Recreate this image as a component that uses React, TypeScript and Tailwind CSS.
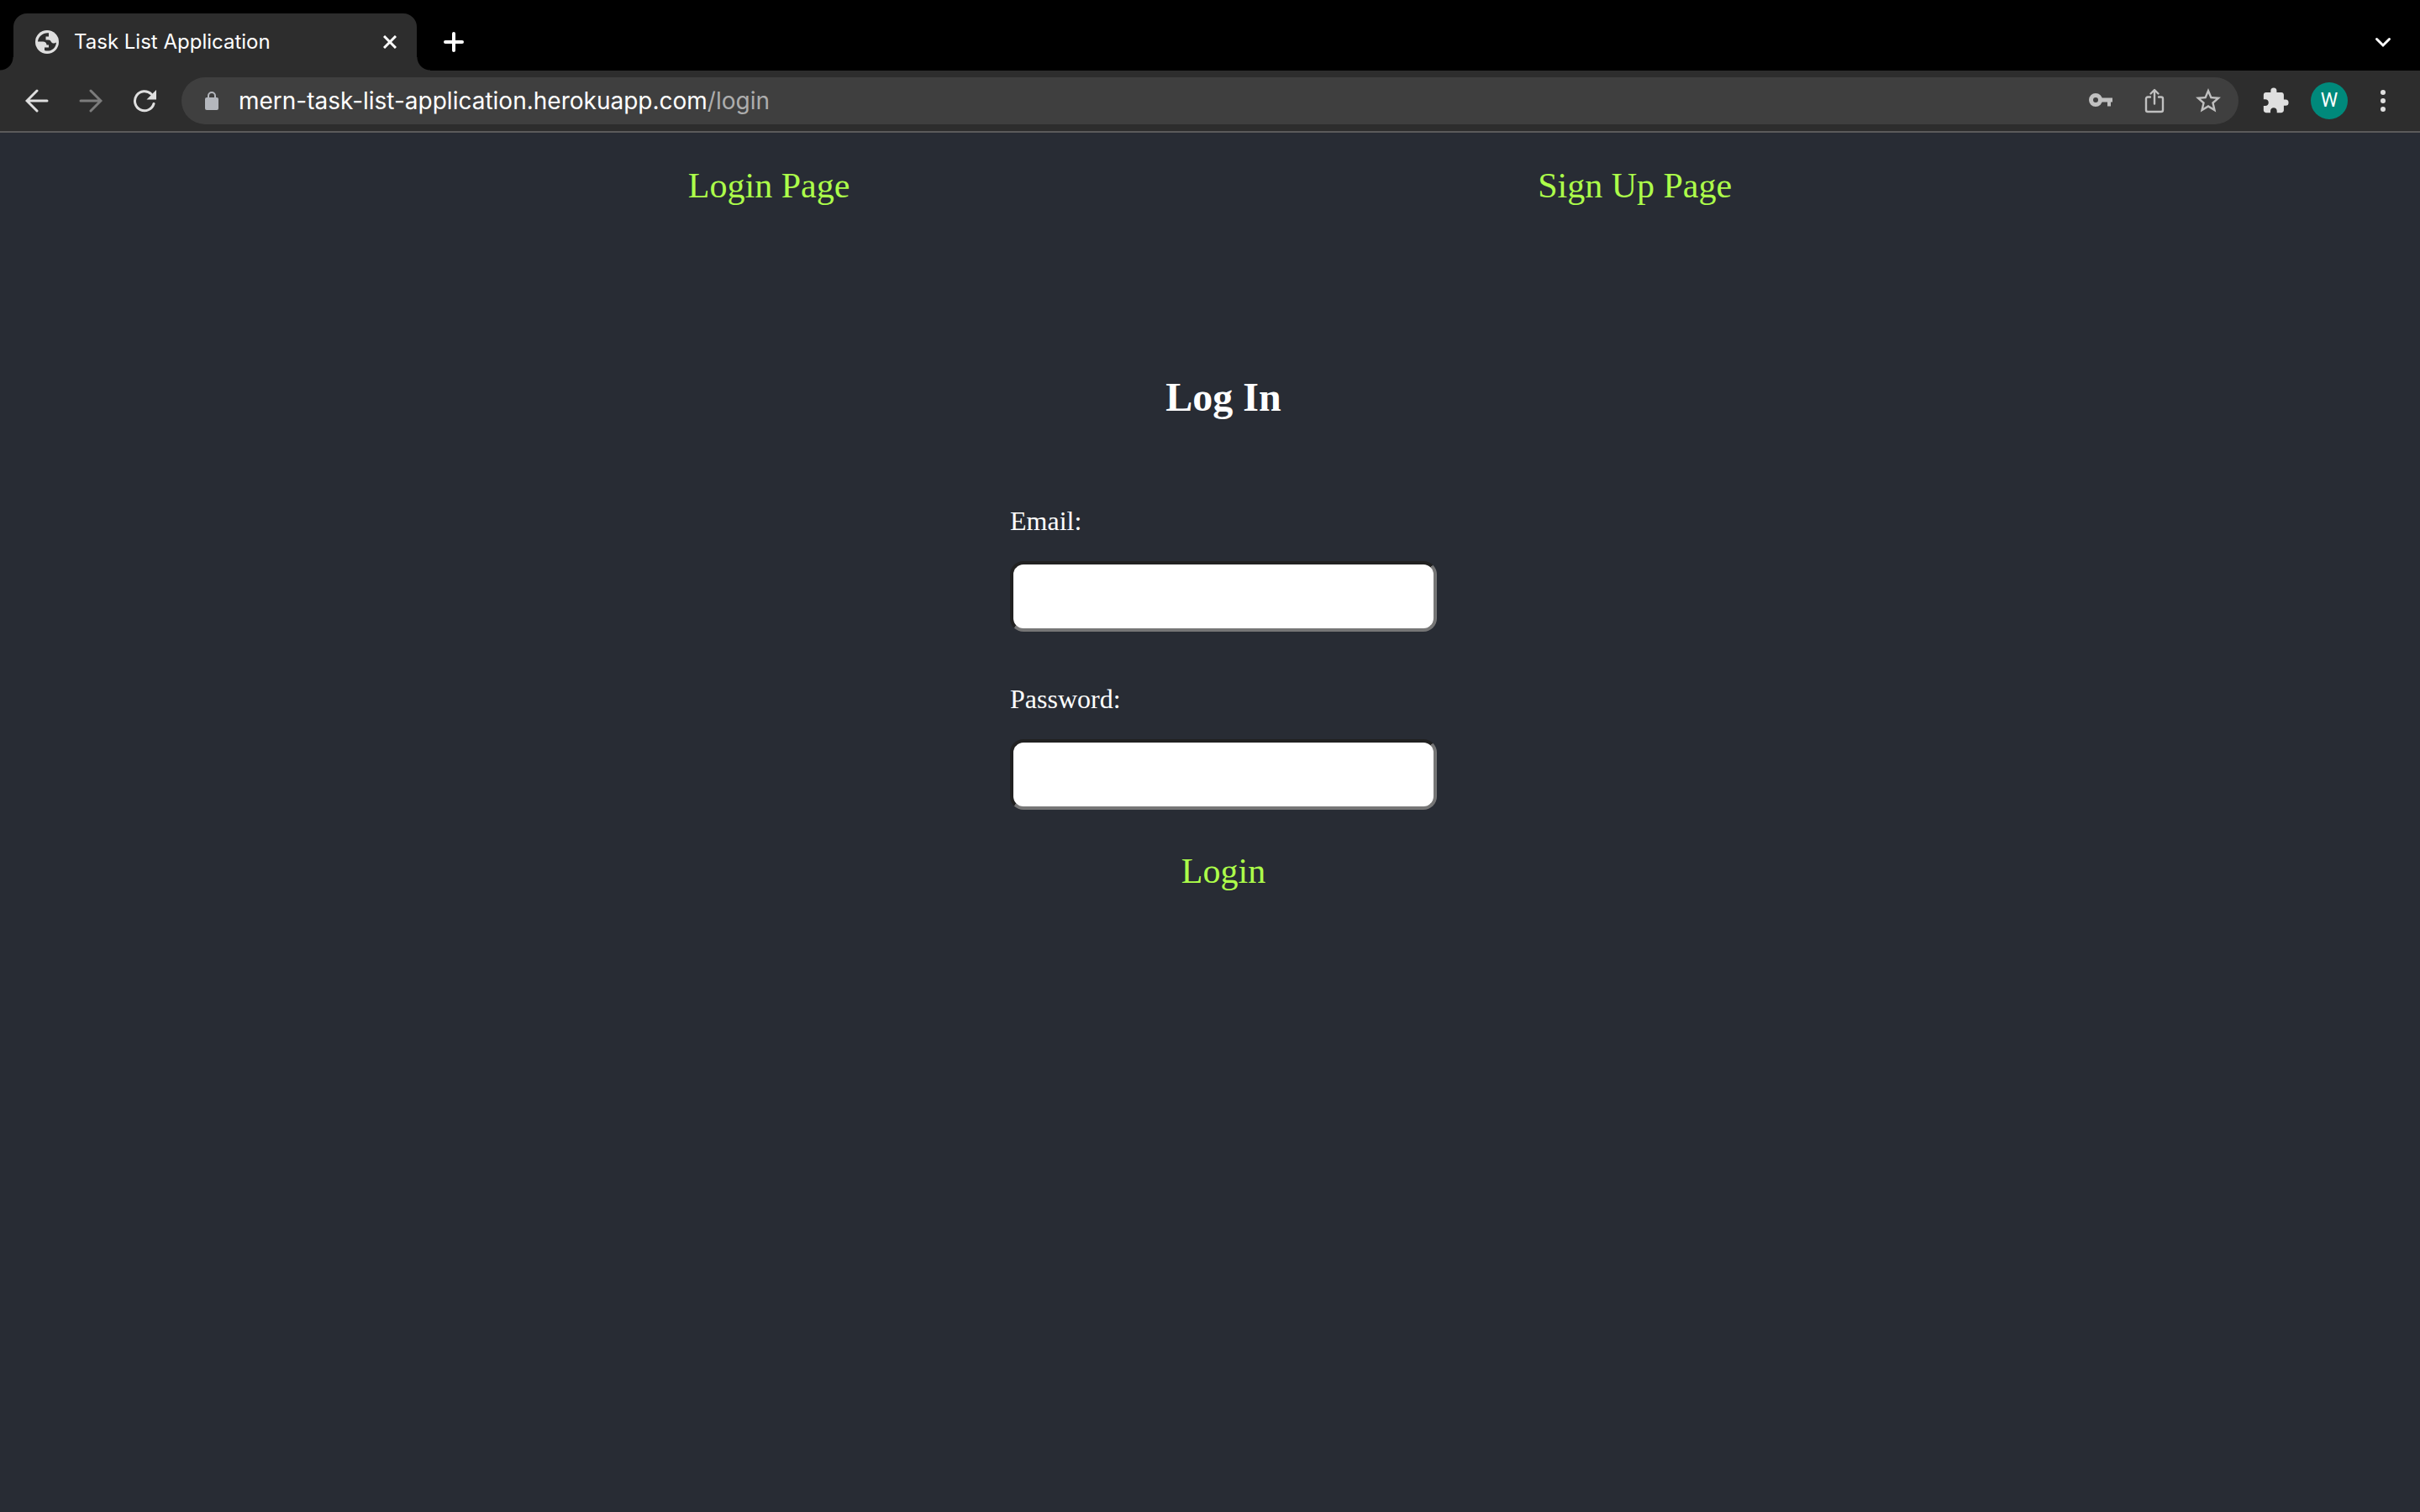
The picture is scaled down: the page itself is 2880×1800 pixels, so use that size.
import React from "react";
import { MdStarBorder, MdExtension } from "react-icons/md";

const iconButton = "flex shrink-0 items-center justify-center";

function GlobeIcon() {
  return (
    <svg className="size-7 shrink-0" viewBox="0 0 28 28" fill="none" aria-hidden="true">
      <circle cx="14" cy="14" r="14" fill="#dfdfdf" />
      <path
        d="M16 3.200C9.500 2.500 3.500 7 3 13.500h6c2.500 0 4.500 1.500 4.500 4h2.500v3h-5v3.500c6.500 2 13.500-1.500 14-9.500-2 1.500-4.500 1.500-6 -.5-1-1.500-1-2.500-3.500-2.500h-3V7.500h3.500z"
        fill="#2d2d2d"
      />
    </svg>
  );
}

function TabStrip() {
  return (
    <div className="flex h-[84px] items-end bg-black pl-4">
      <div className="relative flex h-[68px] w-[480px] items-center rounded-t-2xl bg-[#2d2d2d] pr-4 pl-[26px]">
        <span className="absolute bottom-0 -left-4 size-4 bg-[radial-gradient(circle_at_0_0,#000_15px,#2d2d2d_16px)]" />
        <span className="absolute -right-4 bottom-0 size-4 bg-[radial-gradient(circle_at_100%_0,#000_15px,#2d2d2d_16px)]" />
        <GlobeIcon />
        <span className="ml-[18px] flex-1 text-2xl leading-8 whitespace-nowrap text-white">Task List Application</span>
        <button type="button" aria-label="Close tab" className={`${iconButton} size-8`}>
          <svg className="size-4" viewBox="0 0 16 16" stroke="#fff" strokeWidth="3" aria-hidden="true">
            <path d="M1 1l14 14M15 1L1 15" />
          </svg>
        </button>
      </div>
      <button type="button" aria-label="New tab" className={`${iconButton} ml-5 h-[68px] w-12`}>
        <svg className="size-6" viewBox="0 0 24 24" stroke="#fff" strokeWidth="4" strokeLinecap="round" aria-hidden="true">
          <path d="M2 12h20M12 2v20" />
        </svg>
      </button>
      <button type="button" aria-label="Search tabs" className={`${iconButton} mr-5 ml-auto h-[68px] w-12`}>
        <svg className="size-6" viewBox="0 0 24 24" fill="none" stroke="#fff" strokeWidth="3" strokeLinecap="round" aria-hidden="true">
          <path d="M4.500 8.500l7.500 7.500 7.500-7.500" />
        </svg>
      </button>
    </div>
  );
}

function Toolbar() {
  return (
    <div className="flex h-[74px] items-center border-b-2 border-[#5b5b5b] bg-[#2d2d2d] pr-5 pl-5">
      <button type="button" aria-label="Back" className={`${iconButton} size-12`}>
        <svg className="size-7" viewBox="0 0 28 28" fill="none" stroke="#dfdfdf" strokeWidth="3" strokeLinecap="round" aria-hidden="true">
          <path d="M26 14H3M14 2L2 14l12 12" />
        </svg>
      </button>
      <button type="button" aria-label="Forward" disabled className={`${iconButton} ml-4 size-12`}>
        <svg className="size-7" viewBox="0 0 28 28" fill="none" stroke="#7c7c7c" strokeWidth="3" strokeLinecap="round" aria-hidden="true">
          <path d="M2 14h23M14 2l12 12-12 12" />
        </svg>
      </button>
      <button type="button" aria-label="Reload" className={`${iconButton} ml-4 size-12`}>
        <svg className="size-7" viewBox="0 0 28 28" fill="none" aria-hidden="true">
          <path d="M22 6A11.500 11.500 0 1 0 25 17.500" stroke="#dfdfdf" strokeWidth="3" strokeLinecap="round" />
          <path d="M28 1v11.500H16.500z" fill="#dfdfdf" />
        </svg>
      </button>
      <div className="ml-5 flex h-14 flex-1 items-center rounded-full bg-[#3f3f3f] pr-3 pl-7">
        <svg className="h-[22px] w-4 shrink-0" viewBox="0 0 16 22" fill="none" aria-hidden="true">
          <path d="M4 8V5a4 4 0 0 1 8 0v3" stroke="#b4b7bd" strokeWidth="2" />
          <rect y="7" width="16" height="15" rx="2" fill="#b4b7bd" />
        </svg>
        <span className="ml-6 flex-1 text-[28px] leading-9 whitespace-nowrap text-[#adadad]">
          <span className="text-white">mern-task-list-application.herokuapp.com</span>/login
        </span>
        <button type="button" aria-label="Saved passwords" className={`${iconButton} size-12`}>
          <svg className="h-5 w-7" viewBox="0 0 28 20" fill="none" aria-hidden="true">
            <circle cx="8" cy="9" r="5.500" stroke="#c0c0c0" strokeWidth="5" />
            <path d="M14 6.500h14v5h-2v5h-4v-5h-8z" fill="#c0c0c0" />
          </svg>
        </button>
        <button type="button" aria-label="Share" className={`${iconButton} ml-4 size-12`}>
          <svg className="h-[30px] w-6" viewBox="0 0 24 30" fill="none" stroke="#c0c0c0" strokeWidth="2.400" strokeLinecap="round" strokeLinejoin="round" aria-hidden="true">
            <path d="M7 10.500H4a2 2 0 0 0-2 2V26a2 2 0 0 0 2 2h16a2 2 0 0 0 2-2V12.500a2 2 0 0 0-2-2h-3M12 18.500V3M7.500 6.500L12 2l4.500 4.500" />
          </svg>
        </button>
        <button type="button" aria-label="Bookmark" className={`${iconButton} ml-4 size-12`}>
          <MdStarBorder className="size-9 text-[#c0c0c0]" />
        </button>
      </div>
      <button type="button" aria-label="Extensions" className={`${iconButton} ml-5 size-12`}>
        <MdExtension className="size-[34px] text-[#dfdfdf]" />
      </button>
      <button type="button" aria-label="Profile" className="ml-[18px] flex size-11 items-center justify-center rounded-full bg-[#00897b] font-[Roboto] text-[23px] leading-8 text-white">
        W
      </button>
      <button type="button" aria-label="Menu" className={`${iconButton} ml-[18px] size-12`}>
        <svg className="h-7 w-2" viewBox="0 0 8 28" fill="#dfdfdf" aria-hidden="true">
          <circle cx="4" cy="4" r="3" />
          <circle cx="4" cy="14" r="3" />
          <circle cx="4" cy="24" r="3" />
        </svg>
      </button>
    </div>
  );
}

function Field({ id, label, type }: { id: string; label: string; type: string }) {
  return (
    <div className="flex flex-col gap-[30px]">
      <label htmlFor={id} className="text-[32px] leading-9 text-white">
        {label}
      </label>
      <input
        id={id}
        type={type}
        className="h-[84px] w-full rounded-2xl border-4 border-t-[#212121] border-r-[#767676] border-b-[#767676] border-l-[#212121] bg-white px-4 text-[32px] text-black outline-none"
      />
    </div>
  );
}

export default function App() {
  return (
    <div className="flex min-h-screen flex-col bg-[#282c34]">
      <header className="font-[Inter,sans-serif]">
        <TabStrip />
        <Toolbar />
      </header>
      <main className="font-['Liberation_Serif',serif]">
        <nav className="flex justify-evenly pt-10 text-[42px] leading-[46px] text-[#adff4a]">
          <a href="#login">Login Page</a>
          <a href="#signup">Sign Up Page</a>
        </nav>
        <form className="mt-[200px] flex flex-col items-center pl-8">
          <h1 className="text-5xl leading-[58px] font-bold text-white">Log In</h1>
          <div className="mt-[100px] flex w-[508px] flex-col gap-[62px]">
            <Field id="email" label="Email:" type="email" />
            <Field id="password" label="Password:" type="password" />
          </div>
          <button type="button" className="mt-[50px] text-[42px] leading-[46px] text-[#adff4a]">
            Login
          </button>
        </form>
      </main>
    </div>
  );
}
